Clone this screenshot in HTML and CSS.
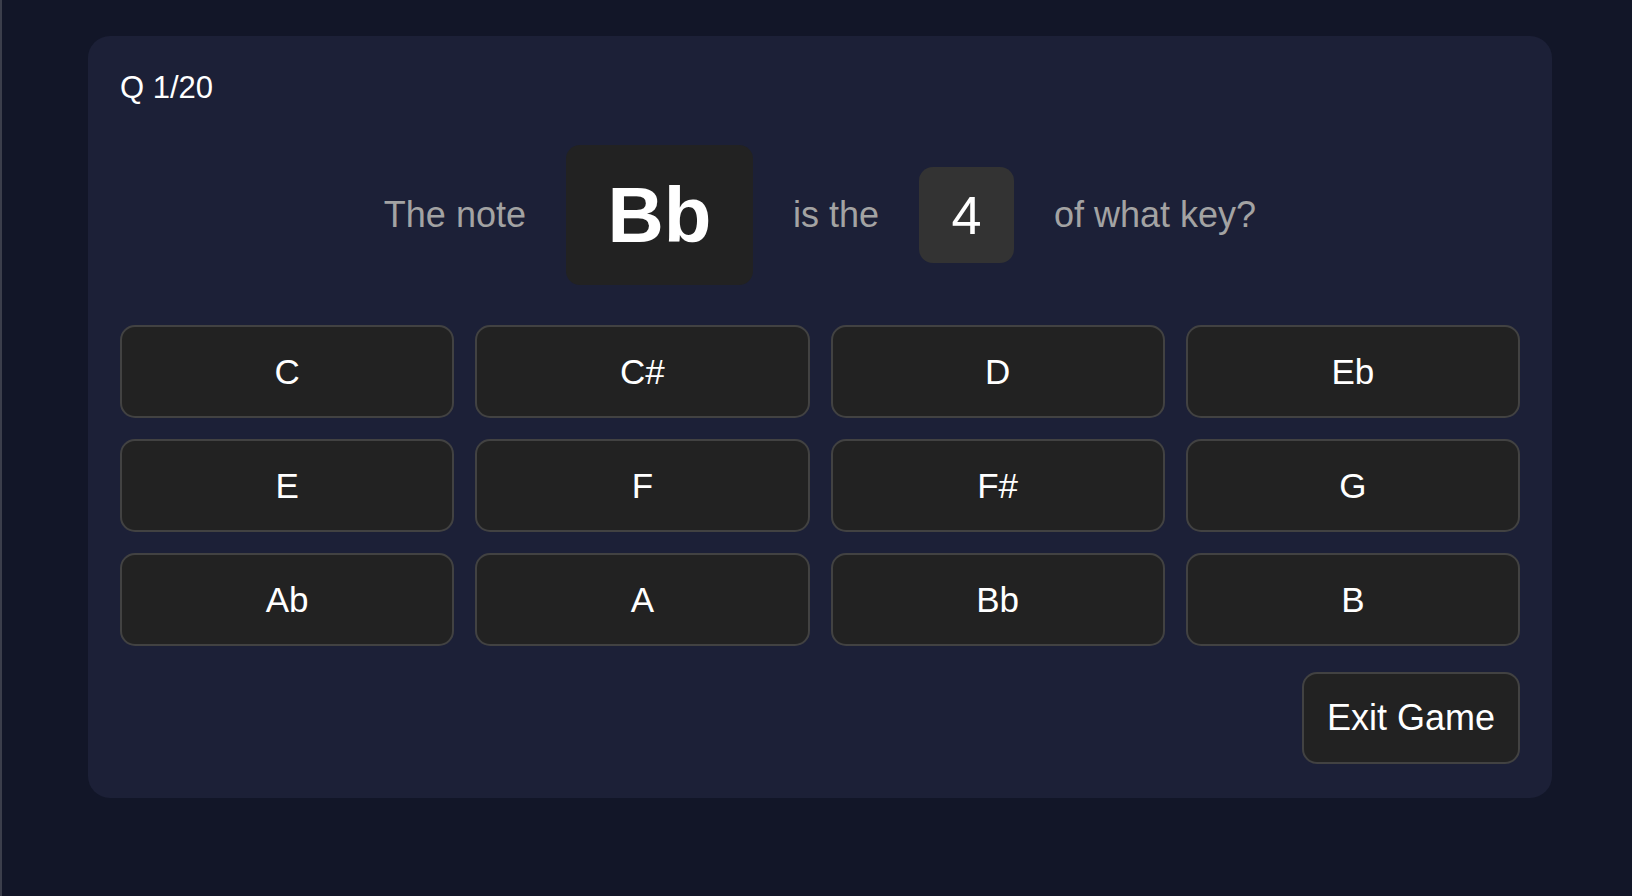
FILE: index.html
```html
<!DOCTYPE html>
<html lang="en">
<head>
<meta charset="utf-8">
<title>Key Quiz</title>
<link rel="stylesheet" href="styles.css">
</head>
<body>
  <main class="card">
    <div class="counter">Q 1/20</div>
    <div class="question">
      <span class="q-text">The note</span>
      <span class="note-box">Bb</span>
      <span class="q-text">is the</span>
      <span class="degree-box">4</span>
      <span class="q-text">of what key?</span>
    </div>
    <div class="options">
      <button class="opt">C</button>
      <button class="opt">C#</button>
      <button class="opt">D</button>
      <button class="opt">Eb</button>
      <button class="opt">E</button>
      <button class="opt">F</button>
      <button class="opt">F#</button>
      <button class="opt">G</button>
      <button class="opt">Ab</button>
      <button class="opt">A</button>
      <button class="opt">Bb</button>
      <button class="opt">B</button>
    </div>
    <div class="footer">
      <button class="exit">Exit Game</button>
    </div>
  </main>
</body>
</html>
```

FILE: styles.css
```css
html, body {
  height: 100%;
}

body {
  margin: 0;
  background: #121628;
  border-left: 2px solid #3b3e4b;
  font-family: "Liberation Sans", Arial, Helvetica, sans-serif;
  color: #ffffff;
  box-sizing: border-box;
  padding: 36px 0 0 86px;
}

.card {
  width: 1464px;
  box-sizing: border-box;
  background: #1c2037;
  border-radius: 22px;
  padding: 35px 32px 34px;
  display: flex;
  flex-direction: column;
}

.counter {
  font-size: 31px;
  line-height: 34px;
  color: #ffffff;
}

.question {
  margin-top: 40px;
  height: 140px;
  display: flex;
  align-items: center;
  justify-content: center;
  gap: 40px;
}

.q-text {
  font-size: 36px;
  color: #a3a3a3;
}

.note-box {
  height: 140px;
  width: 187px;
  box-sizing: border-box;
  display: flex;
  align-items: center;
  justify-content: center;
  background: #222222;
  border-radius: 14px;
  font-size: 78px;
  font-weight: 700;
  color: #ffffff;
}

.degree-box {
  width: 95px;
  height: 96px;
  display: flex;
  align-items: center;
  justify-content: center;
  background: #333333;
  border-radius: 14px;
  font-size: 54px;
  color: #ffffff;
}

.options {
  margin-top: 40px;
  display: grid;
  grid-template-columns: repeat(4, 1fr);
  grid-auto-rows: 93px;
  gap: 21px;
}

.opt,
.exit {
  font-family: inherit;
  background: #222222;
  color: #ffffff;
  border: 2px solid #424242;
  border-radius: 15px;
  font-size: 35px;
  padding: 0;
  margin: 0;
}

.footer {
  margin-top: 26px;
  display: flex;
  justify-content: flex-end;
}

.exit {
  width: 218px;
  height: 92px;
  font-size: 36px;
}
```
